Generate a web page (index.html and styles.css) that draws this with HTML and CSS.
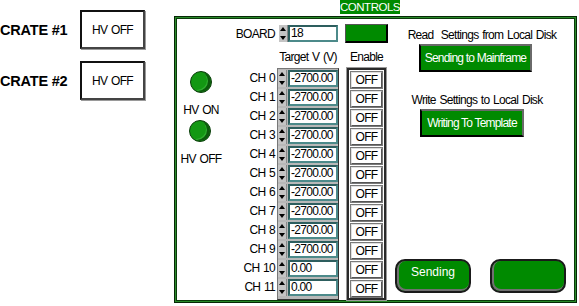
FILE: index.html
```html
<!DOCTYPE html>
<html lang="en">
<head>
    <meta charset="UTF-8">
    <title>HV Controls</title>
    <link rel="stylesheet" href="styles.css">
</head>
<body>
    <div class="crates">
        <div class="crate">
            <span class="crate-name">CRATE #1</span>
            <div class="hv-box">HV OFF</div>
        </div>
        <div class="crate">
            <span class="crate-name">CRATE #2</span>
            <div class="hv-box">HV OFF</div>
        </div>
    </div>

    <div class="controls">
        <div class="controls-title">CONTROLS</div>
        <div class="panel">
            <div class="leds">
                <div class="led"></div>
                <div class="led-label">HV ON</div>
                <div class="led led-off"></div>
                <div class="led-label">HV OFF</div>
            </div>

            <div class="channels">
                <div class="board-row">
                    <span class="board-label">BOARD</span>
                    <span class="spin"></span>
                    <span class="val board-val">18</span>
                    <span class="board-led"></span>
                </div>
                <div class="head-row">
                    <span class="head-target">Target V (V)</span>
                    <span class="head-enable">Enable</span>
                </div>
                <div class="ch-block">
                    <div class="ch-labels">
                        <div>CH 0</div><div>CH 1</div><div>CH 2</div><div>CH 3</div>
                        <div>CH 4</div><div>CH 5</div><div>CH 6</div><div>CH 7</div>
                        <div>CH 8</div><div>CH 9</div><div>CH 10</div><div>CH 11</div>
                    </div>
                    <div class="ch-values">
                        <div class="ch-row"><span class="spin"></span><span class="val">-2700.00</span></div>
                        <div class="ch-row"><span class="spin"></span><span class="val">-2700.00</span></div>
                        <div class="ch-row"><span class="spin"></span><span class="val">-2700.00</span></div>
                        <div class="ch-row"><span class="spin"></span><span class="val">-2700.00</span></div>
                        <div class="ch-row"><span class="spin"></span><span class="val">-2700.00</span></div>
                        <div class="ch-row"><span class="spin"></span><span class="val">-2700.00</span></div>
                        <div class="ch-row"><span class="spin"></span><span class="val">-2700.00</span></div>
                        <div class="ch-row"><span class="spin"></span><span class="val">-2700.00</span></div>
                        <div class="ch-row"><span class="spin"></span><span class="val">-2700.00</span></div>
                        <div class="ch-row"><span class="spin"></span><span class="val">-2700.00</span></div>
                        <div class="ch-row"><span class="spin"></span><span class="val">0.00</span></div>
                        <div class="ch-row"><span class="spin"></span><span class="val">0.00</span></div>
                    </div>
                    <div class="ch-enable">
                        <div class="ch-row"><span class="off">OFF</span></div>
                        <div class="ch-row"><span class="off">OFF</span></div>
                        <div class="ch-row"><span class="off">OFF</span></div>
                        <div class="ch-row"><span class="off">OFF</span></div>
                        <div class="ch-row"><span class="off">OFF</span></div>
                        <div class="ch-row"><span class="off">OFF</span></div>
                        <div class="ch-row"><span class="off">OFF</span></div>
                        <div class="ch-row"><span class="off">OFF</span></div>
                        <div class="ch-row"><span class="off">OFF</span></div>
                        <div class="ch-row"><span class="off">OFF</span></div>
                        <div class="ch-row"><span class="off">OFF</span></div>
                        <div class="ch-row"><span class="off">OFF</span></div>
                    </div>
                </div>
            </div>

            <div class="disk">
                <div class="disk-label read-label">Read&nbsp; Settings from Local Disk</div>
                <div class="green-btn btn-send">Sending to Mainframe</div>
                <div class="disk-label write-label">Write Settings to Local Disk</div>
                <div class="green-btn btn-write">Writing To Template</div>
                <div class="round-row">
                    <div class="round-btn">Sending</div>
                    <div class="round-btn round-empty"></div>
                </div>
            </div>
        </div>
    </div>
</body>
</html>
```

FILE: styles.css
```css
body {
    margin: 0;
    display: flex;
    background: #fff;
    color: #000;
    font-family: "Liberation Sans", Arial, sans-serif;
    font-size: 12px;
    letter-spacing: -0.7px;
    word-spacing: 1px;
    white-space: nowrap;
}

/* crates */
.crates {
    width: 174px;
    padding-top: 10px;
}
.crate {
    display: flex;
    align-items: center;
    height: 39px;
    margin-bottom: 12px;
}
.crate-name {
    width: 80px;
    font-weight: bold;
    font-size: 14.5px;
    letter-spacing: -0.2px;
    word-spacing: 0;
}
.hv-box {
    width: 65px;
    height: 39px;
    box-sizing: border-box;
    border: 2px solid #111;
    border-right-color: #444;
    border-bottom-color: #444;
    box-shadow: 1px 1px 0 #9a9a9a;
    display: flex;
    align-items: center;
    justify-content: center;
}

/* controls panel */
.controls {
    width: 403px;
}
.controls-title {
    margin-left: 166px;
    width: 60px;
    height: 14px;
    line-height: 14px;
    margin-bottom: 2px;
    background: #008a00;
    color: #fff;
    text-align: center;
    font-size: 11.5px;
    letter-spacing: -0.5px;
}
.panel {
    height: 287px;
    box-sizing: border-box;
    border: 1px solid #062806;
    box-shadow: inset 0 0 0 1px #2a8a2a, inset 0 0 0 2px #0a3a0a;
    display: flex;
}

.leds {
    width: 52px;
    padding-top: 54px;
    display: flex;
    flex-direction: column;
    align-items: center;
}
.led {
    width: 22px;
    height: 22px;
    box-sizing: border-box;
    border-radius: 50%;
    border: 1px solid #0b3d0b;
    background: #139813;
    box-shadow: inset -3px -1px 0 #0b5a0b, inset -4px -2px 0 #2fae2f;
}
.led-label {
    height: 14px;
    line-height: 14px;
    margin-top: 10px;
    margin-bottom: 3px;
}
.led-off {
    margin-left: -3px;
}

.channels {
    width: 161px;
    padding-top: 7px;
}
.board-row {
    display: flex;
    align-items: center;
    height: 19px;
}
.board-label {
    width: 48px;
    text-align: right;
    margin-right: 4px;
}
.board-val {
    width: 50px;
    height: 18px;
}
.board-led {
    width: 43px;
    height: 19px;
    box-sizing: border-box;
    margin-left: 7px;
    background: #008a00;
    border: 1px solid #000;
    border-top-color: #555;
    border-left-color: #555;
    box-shadow: inset -1px -1px 0 #000;
}
.head-row {
    display: flex;
    height: 14px;
    line-height: 14px;
    margin-top: 7px;
}
.head-target {
    margin-left: 50px;
    width: 62px;
    text-align: center;
}
.head-enable {
    margin-left: 8px;
    width: 39px;
    text-align: center;
}

.ch-block {
    display: flex;
    margin-top: 4px;
}
.ch-labels {
    width: 48px;
    margin-right: 2px;
    padding-top: 1px;
    text-align: right;
}
.ch-labels div {
    height: 19px;
    line-height: 19px;
}
.ch-row {
    height: 19px;
    display: flex;
    align-items: center;
}
.ch-values {
    width: 62px;
    box-sizing: border-box;
    border: 1px solid #777;
    border-right-color: #333;
    border-bottom-color: #333;
    background: #b8b8b8;
}
.spin {
    position: relative;
    width: 9px;
    height: 17px;
    box-sizing: border-box;
    background: #c4c4c4;
    border-right: 1px solid #888;
    flex: none;
}
.spin::before,
.spin::after {
    content: "";
    position: absolute;
    left: 1px;
    border-left: 3px solid transparent;
    border-right: 3px solid transparent;
}
.spin::before {
    top: 2px;
    border-bottom: 4px solid #000;
}
.spin::after {
    bottom: 2px;
    border-top: 4px solid #000;
}
.val {
    width: 50px;
    height: 17px;
    box-sizing: border-box;
    border: 2px solid #2d5e5e;
    border-right-color: #4c8a8a;
    border-bottom-color: #4c8a8a;
    background: #fff;
    padding-left: 1px;
    line-height: 13px;
    overflow: hidden;
}
.ch-values .val {
    margin-left: 1px;
}

.ch-enable {
    width: 39px;
    margin-left: 8px;
    box-sizing: border-box;
    border: 2px solid #2a2a2a;
    box-shadow: 0 0 0 1px #9a9a9a;
    display: flex;
    flex-direction: column;
    align-items: center;
}
.ch-enable .ch-row {
    height: 19px;
}
.off {
    width: 31px;
    height: 16px;
    box-sizing: border-box;
    border: 1px solid #555;
    border-top-color: #e0e0e0;
    border-left-color: #e0e0e0;
    box-shadow: 0 0 0 1px #7a7a7a;
    background: #fff;
    text-align: center;
    line-height: 14px;
}

/* disk settings */
.disk {
    flex: 1;
    padding-top: 11px;
    padding-bottom: 9px;
    display: flex;
    flex-direction: column;
}
.disk-label {
    height: 14px;
    line-height: 14px;
    text-align: center;
}
.write-label {
    margin-top: 21px;
    margin-right: 10px;
}
.green-btn {
    height: 28px;
    box-sizing: border-box;
    margin-top: 2px;
    background: #008a00;
    color: #fff;
    font-size: 12px;
    letter-spacing: -0.8px;
    word-spacing: 0;
    line-height: 24px;
    text-align: center;
    border: 2px solid #000;
    border-top-color: #6a6a6a;
    border-right-color: #6a6a6a;
}
.btn-send {
    width: 113px;
    margin-left: 31px;
}
.btn-write {
    width: 104px;
    margin-left: 32px;
}
.round-row {
    margin-top: auto;
    display: flex;
    gap: 19px;
    padding-left: 7px;
}
.round-btn {
    width: 76px;
    height: 34px;
    box-sizing: border-box;
    border: 2px solid #1a1a1a;
    border-radius: 10px;
    box-shadow: inset 1px -1px 0 1px #707070;
    background: #008a00;
    color: #fff;
    text-align: center;
    padding-top: 4px;
    font-size: 12px;
    letter-spacing: 0;
    word-spacing: 0;
}
```
